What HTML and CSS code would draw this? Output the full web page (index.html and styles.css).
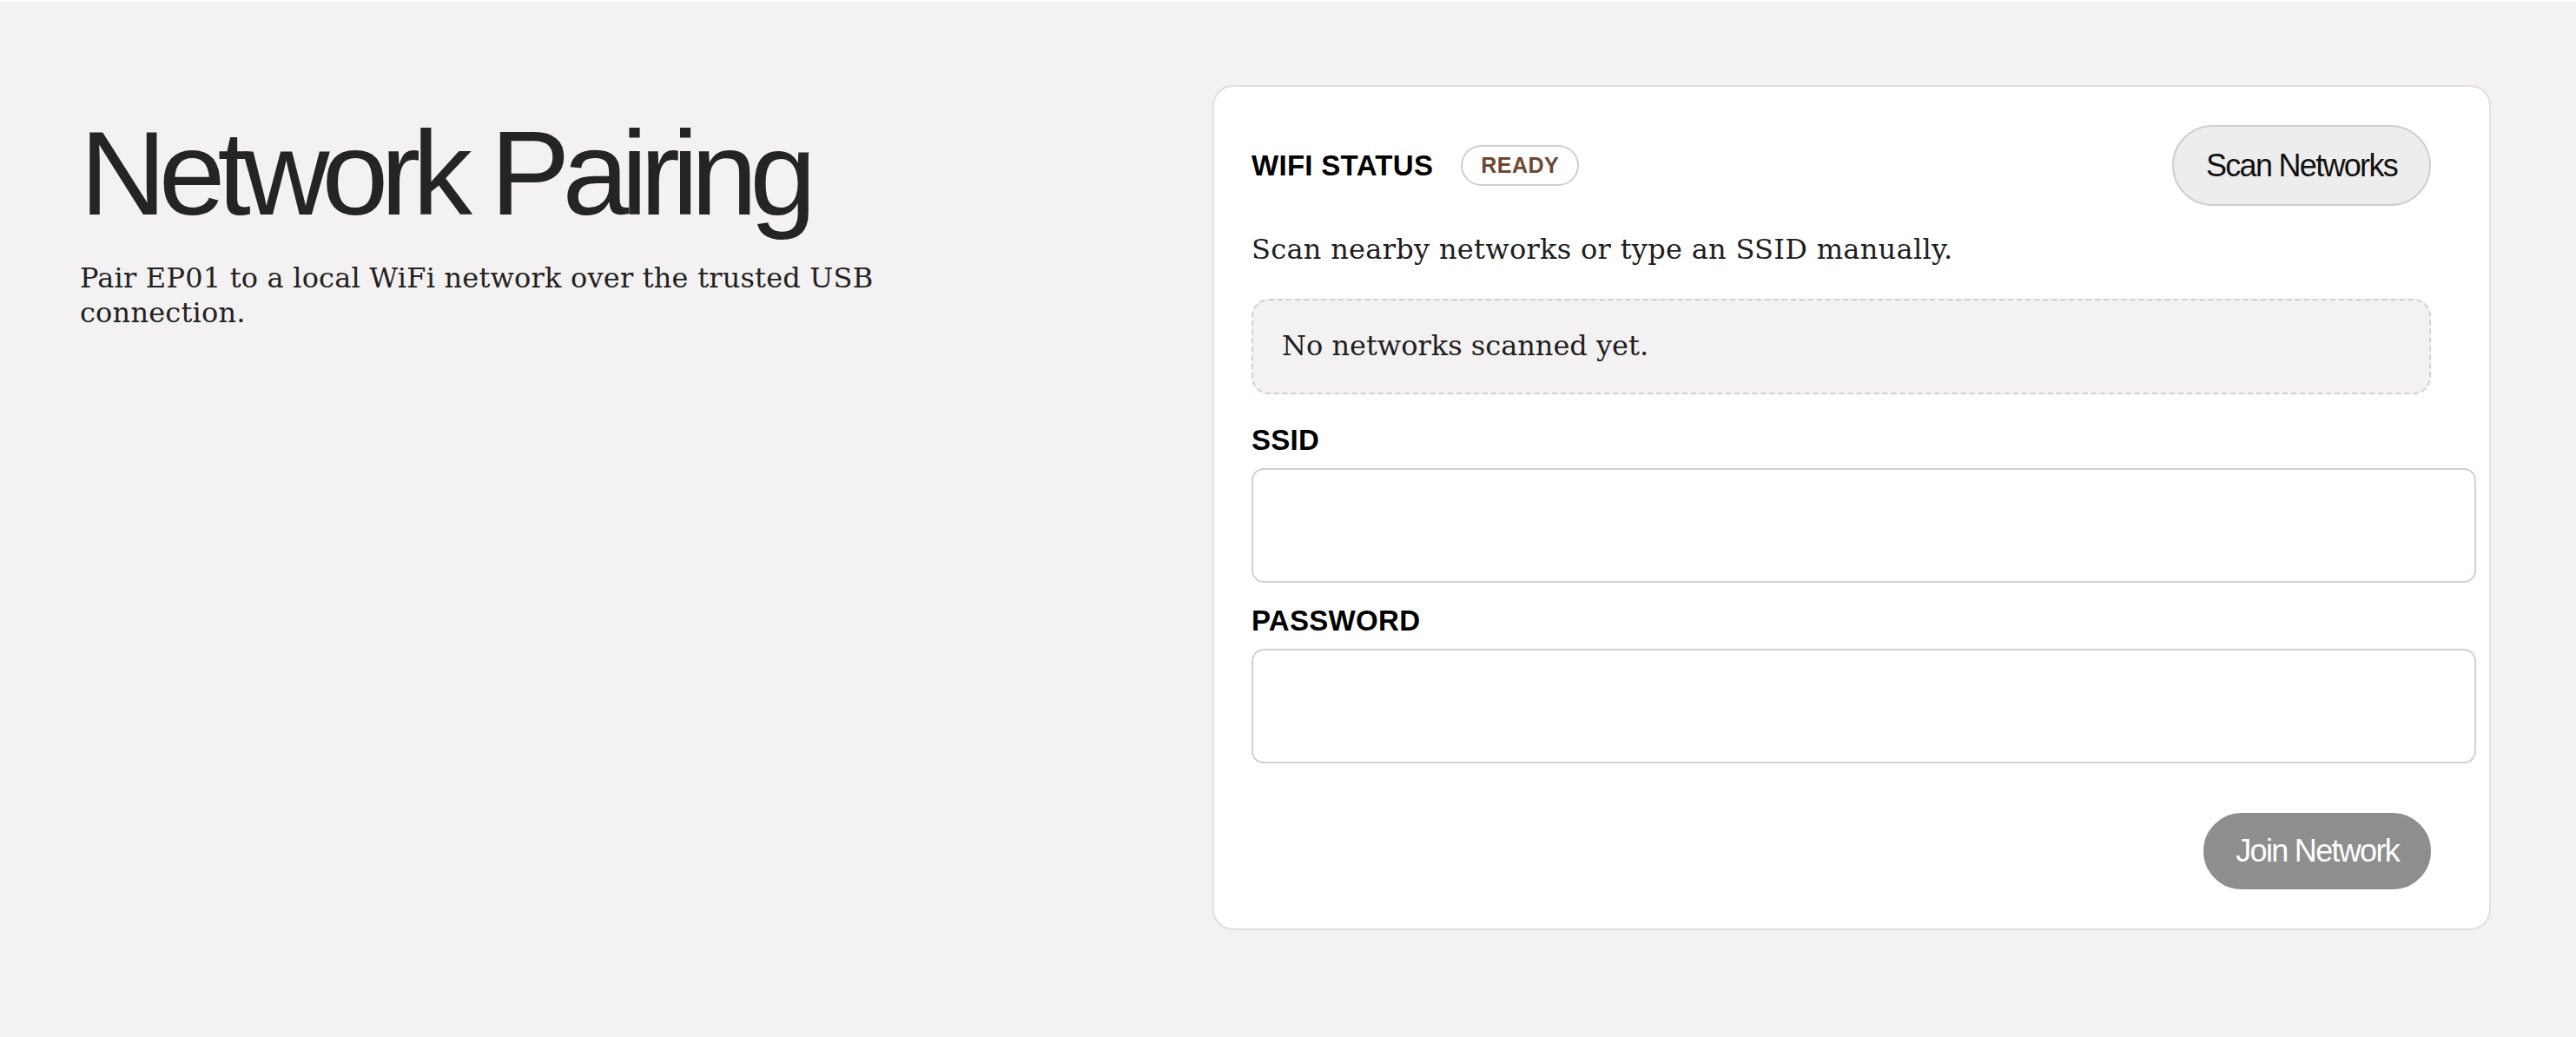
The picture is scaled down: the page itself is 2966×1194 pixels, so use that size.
FILE: index.html
```html
<!DOCTYPE html>
<html lang="en">
<head>
<meta charset="utf-8">
<title>Network Pairing</title>
<link rel="stylesheet" href="styles.css">
</head>
<body>
<main class="page">
  <section class="intro">
    <h1 class="title">Network Pairing</h1>
    <p class="lede">Pair EP01 to a local WiFi network over the trusted USB connection.</p>
  </section>
  <section class="card">
    <div class="card-head">
      <div class="status">
        <span class="status-label">WIFI STATUS</span>
        <span class="badge">READY</span>
      </div>
      <button class="btn btn-secondary" type="button">Scan Networks</button>
    </div>
    <p class="hint">Scan nearby networks or type an SSID manually.</p>
    <div class="empty">No networks scanned yet.</div>
    <label class="field-label" for="ssid">SSID</label>
    <input id="ssid" class="field" type="text">
    <label class="field-label field-label-next" for="pw">PASSWORD</label>
    <input id="pw" class="field" type="password">
    <div class="actions">
      <button class="btn btn-primary" type="button" disabled>Join Network</button>
    </div>
  </section>
</main>
</body>
</html>
```
FILE: styles.css
```css
* { margin: 0; }

html, body {
  background: #f3f1f1;
}

body {
  margin: 0;
  border-top: 2px solid #ffffff;
  font-family: "DejaVu Serif", serif;
  color: #222222;
}

.page {
  display: grid;
  grid-template-columns: 1fr 1472px;
  padding: 96px 98px 98px 92px;
  column-gap: 40px;
  align-items: start;
}

.intro {
  padding-top: 32px;
}

.title {
  font-family: "Liberation Sans", Arial, sans-serif;
  font-weight: 400;
  font-size: 138px;
  line-height: 138px;
  letter-spacing: -9px;
  color: #242424;
}

.lede {
  margin-top: 32px;
  max-width: 960px;
  font-size: 32px;
  line-height: 40px;
  letter-spacing: 0.2px;
  color: #222222;
}

.card {
  background: #ffffff;
  border: 2px solid #e2e0dd;
  border-radius: 24px;
  padding: 44px 67px 45px 43px;
}

.card-head {
  display: flex;
  align-items: center;
  justify-content: space-between;
}

.status {
  display: flex;
  align-items: center;
  gap: 32px;
}

.status-label,
.field-label {
  font-family: "Liberation Sans", Arial, sans-serif;
  font-weight: 700;
  font-size: 33px;
  line-height: 38px;
  letter-spacing: 0.3px;
  color: #000000;
}

.badge {
  font-family: "Liberation Sans", Arial, sans-serif;
  font-weight: 700;
  font-size: 25px;
  line-height: 29px;
  letter-spacing: 0.5px;
  color: #6e4832;
  background: #ffffff;
  border: 2px solid #d2d0ce;
  border-radius: 999px;
  padding: 7px 21px;
}

.btn {
  font-family: "Liberation Sans", Arial, sans-serif;
  font-weight: 400;
  font-size: 36px;
  letter-spacing: -1.7px;
  border-radius: 999px;
  cursor: pointer;
}

.btn-secondary {
  line-height: 41px;
  padding: 24px 37px;
  background: #ededed;
  border: 2px solid #cfcfcf;
  color: #111111;
}

.btn-primary {
  line-height: 40px;
  padding: 22px 35px;
  background: #8e8e8e;
  border: 2px solid #8e8e8e;
  color: #ffffff;
}

.hint {
  margin-top: 28px;
  font-size: 32px;
  line-height: 45px;
  letter-spacing: 0.3px;
  color: #1e1e1e;
}

.empty {
  margin-top: 34px;
  background: #f3f1f1;
  border: 2px dashed #d5cfcf;
  border-radius: 20px;
  padding: 30px 33px 31px;
  font-size: 32px;
  line-height: 45px;
  color: #1e1e1e;
}

.field-label {
  display: block;
  margin-top: 34px;
}

.field-label-next {
  margin-top: 25px;
}

.field {
  display: block;
  box-sizing: content-box;
  width: 100%;
  height: 128px;
  margin-top: 13px;
  padding: 0 24px;
  border: 2px solid #d8cfc7;
  border-radius: 14px;
  background: #ffffff;
  font-family: "DejaVu Serif", serif;
  font-size: 32px;
  outline: none;
}

.actions {
  display: flex;
  justify-content: flex-end;
  margin-top: 57px;
}
```
